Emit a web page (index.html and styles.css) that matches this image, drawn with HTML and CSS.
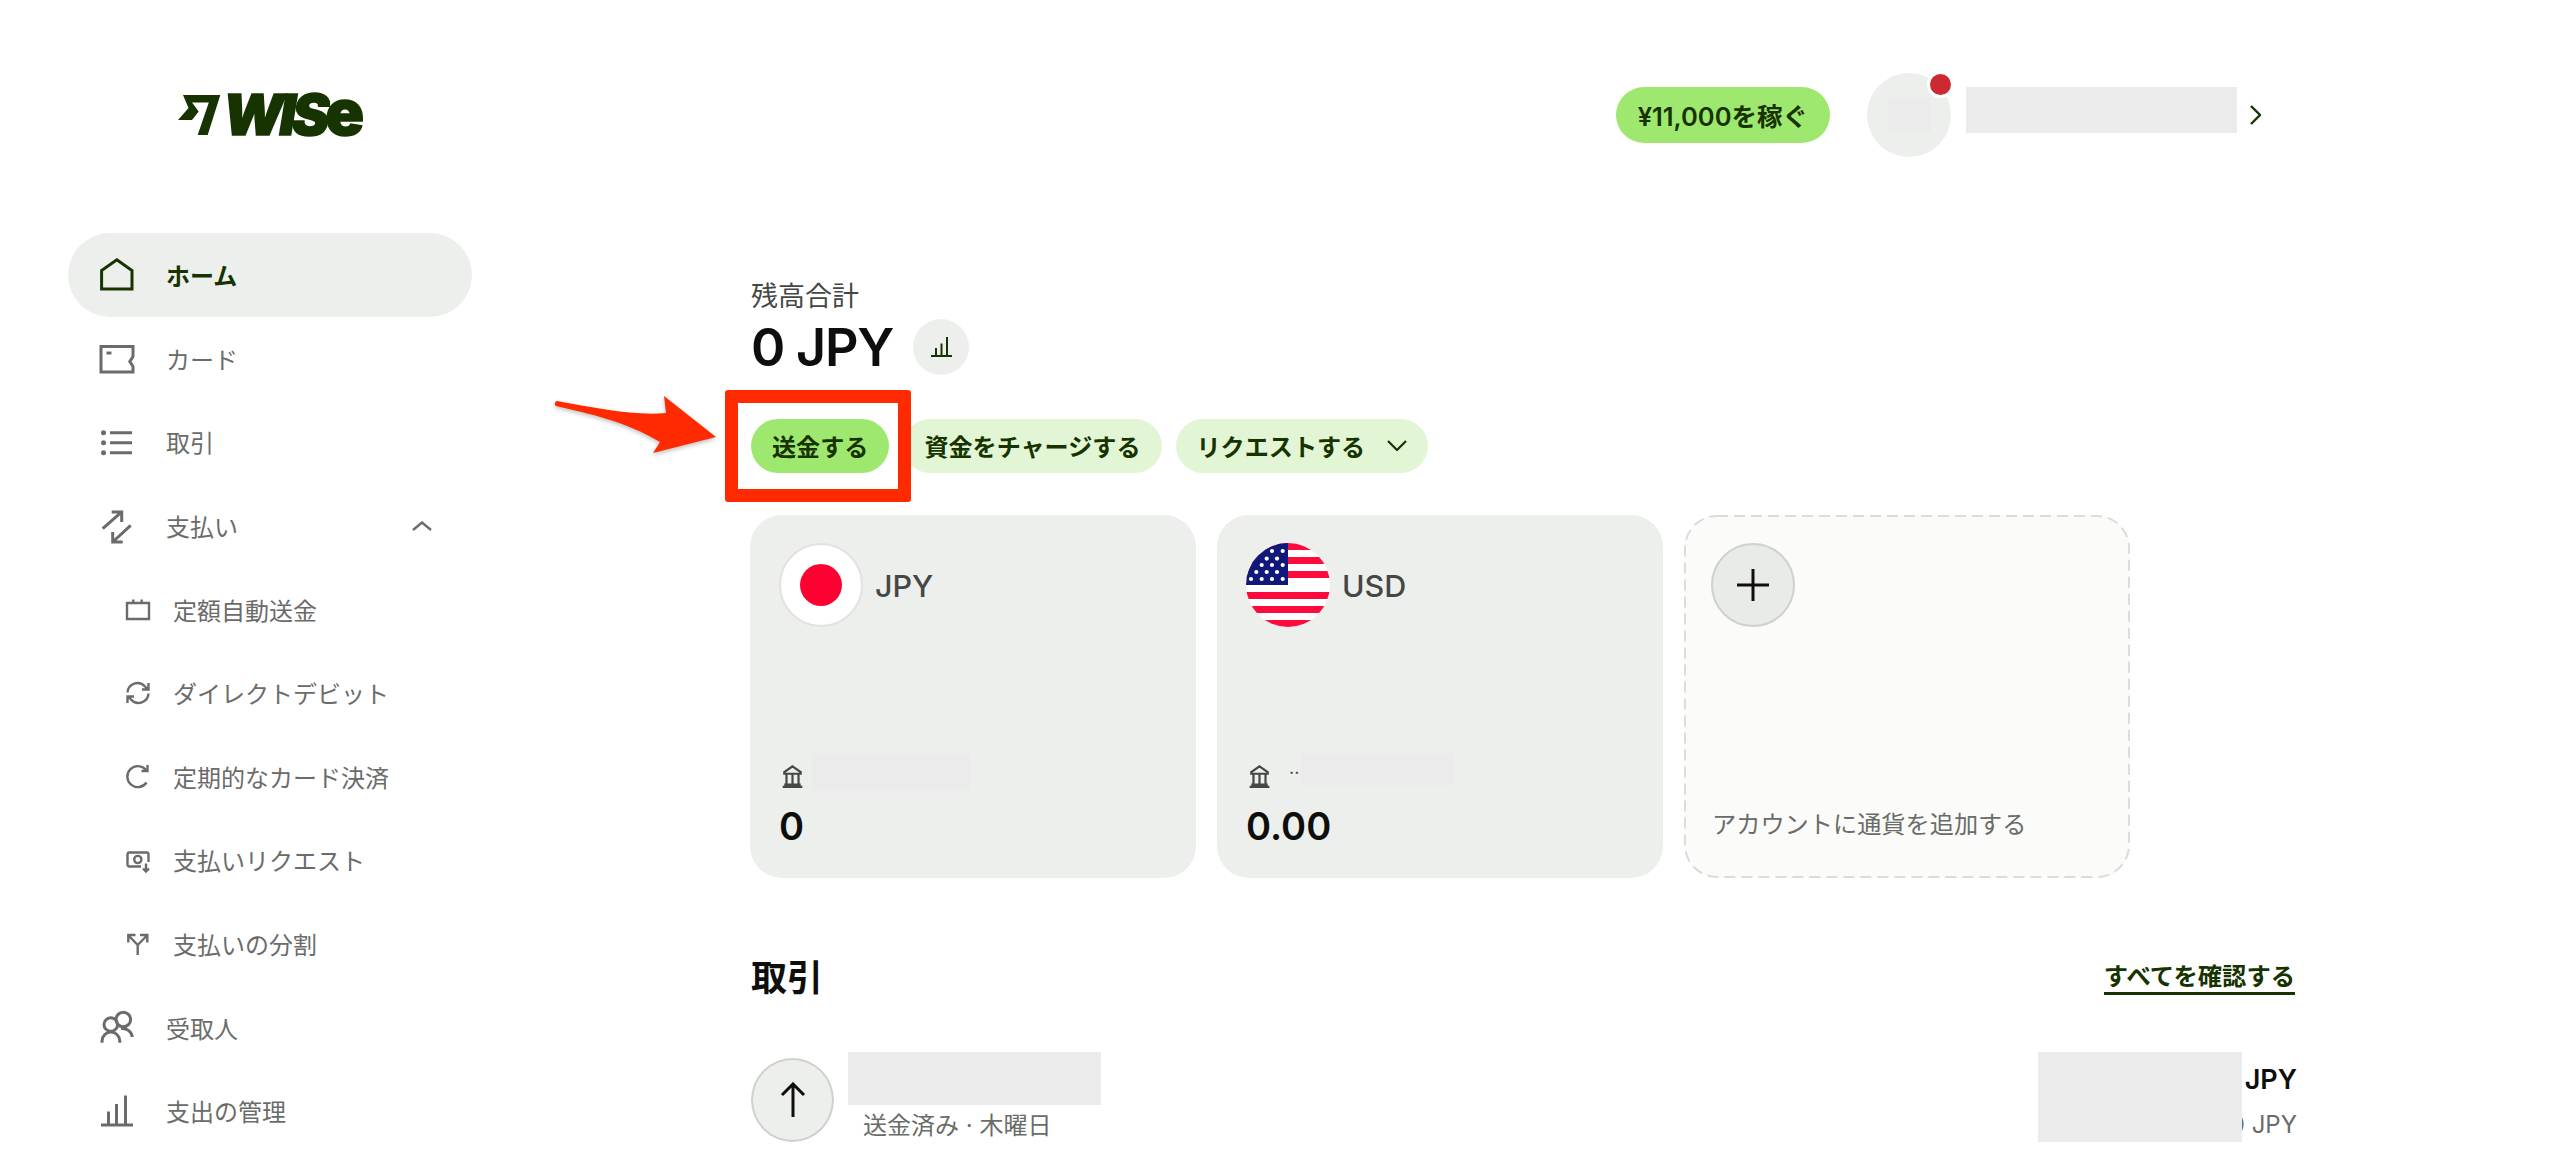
FILE: index.html
```html
<!DOCTYPE html>
<html lang="ja">
  <head>
    <meta charset="UTF-8" />
    <meta name="viewport" content="width=device-width, initial-scale=1.0" />
    <title>Wise</title>
    <link rel="stylesheet" href="styles.css">
  </head>
  <body>
    <div class="page">
      <!-- Sidebar -->
      <aside class="sidebar">
        <a class="logo">
          <svg class="logo__mark" viewBox="0 0 43 40"><path d="M5 0H42.3L29.7 40H19.7L30.8 7.5H14L20.7 16.5L14 25H0L10.5 13Z"/></svg>
          <span class="logo__word">WIS<span class="logo__e">e</span></span>
        </a>
        <nav class="nav">
          <a class="nav__item nav__item--active">
            <svg class="nav__icon" viewBox="0 0 34 34"><path d="M16.8 1.8L32 12.5V31H1.6V12.5Z"/></svg>
            <span>ホーム</span>
          </a>
          <a class="nav__item">
            <svg class="nav__icon" viewBox="0 0 34 34"><path d="M1 5.5H33V15.5L29.8 20.5L33 25.5V31H1Z"/><path d="M6.5 12H11.5"/></svg>
            <span>カード</span>
          </a>
          <a class="nav__item">
            <svg class="nav__icon" viewBox="0 0 34 34"><path d="M10 7.7H32M10 17.7H32M10 27.7H32"/><path class="nav__dot" d="M3.5 7.7h.01M3.5 17.7h.01M3.5 27.7h.01"/></svg>
            <span>取引</span>
          </a>
          <a class="nav__item">
            <svg class="nav__icon" viewBox="0 0 34 34"><path d="M2.7 19.7L21.7 2.8M11.7 3H21.7V13M30.7 16.3L12.7 33M12.7 23V33H22.7"/></svg>
            <span>支払い</span>
            <svg class="nav__chevron" viewBox="0 0 20 10"><path d="M1 9L10 1.5L19 9"/></svg>
          </a>
          <a class="nav__item nav__item--sub">
            <svg class="nav__icon" viewBox="0 0 24 24"><path d="M1 6H23V22H1ZM7.3 2.5V7M15.7 2.5V7"/><path d="M17.3 16.3h.01"/></svg>
            <span>定額自動送金</span>
          </a>
          <a class="nav__item nav__item--sub">
            <svg class="nav__icon" viewBox="0 0 24 24"><path d="M1.5 11.5A10 10 0 0 1 19 5.5L22 8.5M22.5 2V8.5H16M22.5 12.5A10 10 0 0 1 5 18.5L2 15.5M1.5 22V15.5H8"/></svg>
            <span>ダイレクトデビット</span>
          </a>
          <a class="nav__item nav__item--sub">
            <svg class="nav__icon" viewBox="0 0 24 24"><path d="M20 6A10.5 10.5 0 1 0 20.5 18.5M21.5 1V7H15.5"/></svg>
            <span>定期的なカード決済</span>
          </a>
          <a class="nav__item nav__item--sub">
            <svg class="nav__icon" viewBox="0 0 24 24"><path d="M15 18.5H3A2 2 0 0 1 1.5 17V6A2 2 0 0 1 3 4.5H21A2 2 0 0 1 22.5 6V14"/><circle cx="11.8" cy="11.5" r="3.6"/><path d="M20 15.5V23M17 20.5L20 23.5L23 20.5"/></svg>
            <span>支払いリクエスト</span>
          </a>
          <a class="nav__item nav__item--sub">
            <svg class="nav__icon" viewBox="0 0 24 24"><path d="M11.7 23V13L2.5 3.5M2.3 10.5V3H9.5M11.7 13L21 3.5M14 3H21.3V10.5"/></svg>
            <span>支払いの分割</span>
          </a>
          <a class="nav__item">
            <svg class="nav__icon" viewBox="0 0 34 34"><circle cx="10.8" cy="14.5" r="6.8"/><circle cx="23.3" cy="9.5" r="7.3"/><path d="M2 32.8V31A8.8 8.8 0 0 1 19.8 31V32.8M21 18.5A10 10 0 0 1 32.3 27"/></svg>
            <span>受取人</span>
          </a>
          <a class="nav__item">
            <svg class="nav__icon" viewBox="0 0 34 34"><path d="M1 31H33M8.5 31V17.5M16.5 31V10M25.5 31V1.5"/></svg>
            <span>支出の管理</span>
          </a>
        </nav>
      </aside>

      <!-- Main -->
      <main class="content">
        <header class="topbar">
          <button class="btn btn--primary btn--earn">¥11,000を稼ぐ</button>
          <div class="avatar">
            <span class="avatar__mask"></span>
            <span class="avatar__dot"></span>
          </div>
          <span class="topbar__name"></span>
          <svg class="topbar__chevron" viewBox="0 0 11 20"><path d="M1 1L10 10L1 19"/></svg>
        </header>

        <section class="balance">
          <p class="balance__label">残高合計</p>
          <div class="balance__total">
            <span class="balance__amount">0 JPY</span>
            <span class="balance__chart">
              <svg viewBox="0 0 21 20"><path d="M0 19H21M5 19V11M10.5 19V6.5M16 19V0"/></svg>
            </span>
          </div>
        </section>

        <div class="actions">
          <button class="btn btn--primary">送金する</button>
          <button class="btn btn--soft">資金をチャージする</button>
          <button class="btn btn--soft">リクエストする
            <svg class="btn__chevron" viewBox="0 0 20 11"><path d="M1 1L10 10L19 1"/></svg>
          </button>
        </div>

        <div class="cards">
          <div class="card">
            <div class="card__head">
              <svg class="flag" viewBox="0 0 84 84"><circle class="flag__ring" cx="42" cy="42" r="41"/><circle cx="42" cy="42" r="21" fill="#ff0033"/></svg>
              <span class="card__currency">JPY</span>
            </div>
            <div class="card__foot">
              <div class="card__bank">
                <svg class="card__bank-icon" viewBox="0 0 21 21"><path d="M10.5 1.2L18 6.5V8H3V6.5ZM1.5 20H19.5M5 8V18M10.5 8V18M16 8V18M3 18H18"/></svg>
                <span class="card__mask"></span>
              </div>
              <div class="card__amount">0</div>
            </div>
          </div>

          <div class="card">
            <div class="card__head">
              <svg class="flag" viewBox="0 0 84 84">
                <defs><clipPath id="flag-clip"><circle cx="42" cy="42" r="42"/></clipPath></defs>
                <g clip-path="url(#flag-clip)">
                  <rect width="84" height="84" fill="#fff"/>
                  <path d="M0 0H84V7H0ZM0 14H84V21H0ZM0 28H84V35H0ZM0 49H84V56H0ZM0 63H84V70H0ZM0 77H84V84H0Z" fill="#ff0a3c"/>
                  <rect width="42" height="42" fill="#10187a"/>
                  <g fill="#fff">
                    <circle cx="26" cy="8" r="2.1"/><circle cx="36.7" cy="8" r="2.1"/>
                    <circle cx="20.7" cy="15.6" r="2.1"/><circle cx="31" cy="15.6" r="2.1"/>
                    <circle cx="15.7" cy="22" r="2.1"/><circle cx="26" cy="22" r="2.1"/><circle cx="36.7" cy="22" r="2.1"/>
                    <circle cx="10.3" cy="29" r="2.1"/><circle cx="20.7" cy="29" r="2.1"/><circle cx="31" cy="29" r="2.1"/>
                    <circle cx="5" cy="36" r="2.1"/><circle cx="15.7" cy="36" r="2.1"/><circle cx="26" cy="36" r="2.1"/><circle cx="36.7" cy="36" r="2.1"/>
                  </g>
                </g>
              </svg>
              <span class="card__currency">USD</span>
            </div>
            <div class="card__foot">
              <div class="card__bank card__bank--usd">
                <svg class="card__bank-icon" viewBox="0 0 21 21"><path d="M10.5 1.2L18 6.5V8H3V6.5ZM1.5 20H19.5M5 8V18M10.5 8V18M16 8V18M3 18H18"/></svg>
                <span class="card__dots">··</span>
                <span class="card__mask card__mask--usd"></span>
              </div>
              <div class="card__amount">0.00</div>
            </div>
          </div>

          <div class="card card--add">
            <svg class="card__dash" viewBox="0 0 446 363"><rect x="1" y="1" width="444" height="361" rx="32"/></svg>
            <span class="card__plus">
              <svg viewBox="0 0 32 32"><path d="M16 0V32M0 16H32"/></svg>
            </span>
            <span class="card__add-label">アカウントに通貨を追加する</span>
          </div>
        </div>

        <div class="section-head">
          <h2 class="section-head__title">取引</h2>
          <a class="section-head__link">すべてを確認する</a>
        </div>

        <div class="tx">
          <span class="tx__icon">
            <svg viewBox="0 0 28 36"><path d="M14 35V2M3 13L14 2L25 13"/></svg>
          </span>
          <div class="tx__info">
            <span class="tx__mask"></span>
            <span class="tx__meta">送金済み · 木曜日</span>
          </div>
          <div class="tx__right">
            <span class="tx__amount">JPY</span>
            <span class="tx__sub">0 JPY</span>
            <span class="tx__right-mask"></span>
          </div>
        </div>
      </main>

      <!-- Annotation over the screenshot -->
      <span class="note-box"></span>
      <svg class="note-arrow" viewBox="0 0 165 62"><path d="M2 5C40 12 80 20 111 17L109 0L161 41L98 57L105 46C70 25 35 18 1 10C-1 9 0 5 2 5Z"/></svg>
    </div>
  </body>
</html>
```

FILE: styles.css
```css
* {
  box-sizing: border-box;
}

body {
  margin: 0;
  background-color: #fff;
  color: #0e0f0c;
  font-family: Inter, "Noto Sans CJK JP", sans-serif;
}

.page {
  position: relative;
  display: flex;
  width: 2560px;
  height: 1170px;
  overflow: hidden;
}

p,
h2 {
  margin: 0;
}

/* Sidebar */
.sidebar {
  width: 404px;
  margin: 0 68px;
  flex-shrink: 0;
}

.logo {
  display: flex;
  align-items: center;
  height: 42px;
  margin: 94px 0 97px 110px;
  color: #163300;
}

.logo__mark {
  width: 43px;
  height: 40px;
  fill: #163300;
}

.logo__word {
  margin: -4px 0 0 2px;
  font-size: 56px;
  font-weight: 900;
  font-style: italic;
  letter-spacing: -4px;
  line-height: 42px;
  white-space: nowrap;
  -webkit-text-stroke: 1.5px #163300;
}

.logo__e {
  font-size: 64px;
  font-style: normal;
  letter-spacing: 0;
}

.nav__item {
  display: flex;
  align-items: center;
  height: 83.6px;
  padding: 0 40px 0 32px;
  border-radius: 42px;
  color: #6a6c6a;
  font-size: 24px;
}

.nav__item--active {
  background-color: #edefec;
  color: #163300;
  font-weight: 700;
}

.nav__item--sub {
  padding-left: 58px;
}

.nav__icon {
  width: 34px;
  height: 34px;
  margin-right: 32px;
  flex-shrink: 0;
  fill: none;
  stroke: currentColor;
  stroke-width: 3;
  overflow: visible;
}

.nav__item--sub .nav__icon {
  width: 24px;
  height: 24px;
  margin-right: 23px;
  stroke-width: 2.4;
}

.nav__dot {
  stroke-width: 5;
  stroke-linecap: round;
}

.nav__chevron {
  width: 20px;
  height: 10px;
  margin-left: auto;
  fill: none;
  stroke: currentColor;
  stroke-width: 2.4;
}

/* Main column */
.content {
  flex: none;
  width: 1755px;
  padding-left: 211px;
}

.topbar {
  display: flex;
  align-items: center;
  justify-content: flex-end;
  width: 1510px;
  height: 84px;
  margin-top: 73px;
}

.btn {
  display: inline-flex;
  align-items: center;
  height: 54px;
  padding: 0 21px 2px;
  border: none;
  border-radius: 28px;
  color: #163300;
  font-family: inherit;
  font-size: 24.1px;
  font-weight: 600;
  white-space: nowrap;
}

.btn--primary {
  background-color: #9fe870;
}

.btn--soft {
  background-color: #e2f6d5;
}

.btn--earn {
  height: 56px;
  padding: 0 22px 2px;
  margin-right: 37px;
  font-size: 25.5px;
}

.btn__chevron {
  width: 20px;
  height: 11px;
  margin-left: 22px;
  fill: none;
  stroke: #163300;
  stroke-width: 2.2;
}

.avatar {
  position: relative;
  display: flex;
  align-items: center;
  justify-content: center;
  width: 84px;
  height: 84px;
  border-radius: 50%;
  background-color: #edefec;
}

.avatar__mask {
  width: 43px;
  height: 36px;
  background-color: #ebebeb;
}

.avatar__dot {
  position: absolute;
  top: -2px;
  right: -3px;
  width: 27px;
  height: 27px;
  border: 3px solid #fff;
  border-radius: 50%;
  background-color: #cb2a33;
}

.topbar__name {
  width: 271px;
  height: 46px;
  margin: -10px 0 0 15px;
  background-color: #ebebeb;
}

.topbar__chevron {
  width: 11px;
  height: 20px;
  margin-left: 13px;
  fill: none;
  stroke: #163300;
  stroke-width: 2.4;
}

/* Balance */
.balance {
  margin-top: 120px;
}

.balance__label {
  color: #454745;
  font-size: 27px;
  line-height: 40px;
}

.balance__total {
  display: flex;
  align-items: center;
  height: 56px;
  margin-top: 2px;
}

.balance__amount {
  padding-top: 2px;
  font-size: 52px;
  font-weight: 600;
  line-height: 56px;
  letter-spacing: -1.2px;
}

.balance__chart {
  display: flex;
  align-items: center;
  justify-content: center;
  width: 56px;
  height: 56px;
  margin-left: 20px;
  border-radius: 50%;
  background-color: #edefec;
}

.balance__chart svg {
  width: 21px;
  height: 20px;
  fill: none;
  stroke: #163300;
  stroke-width: 2;
}

.actions {
  display: flex;
  gap: 14px;
  margin-top: 44px;
}

/* Currency cards */
.cards {
  display: grid;
  grid-template-columns: repeat(3, 446px);
  gap: 21px;
  margin: 42px 0 0 -1px;
}

.card {
  position: relative;
  display: flex;
  flex-direction: column;
  justify-content: space-between;
  height: 363px;
  padding: 28px 29px;
  border-radius: 32px;
  background-color: #edefec;
}

.card__head {
  display: flex;
  align-items: center;
}

.flag {
  width: 84px;
  height: 84px;
}

.flag__ring {
  fill: #fff;
  stroke: #e2e2e0;
  stroke-width: 2;
}

.card__currency {
  margin-left: 12px;
  color: #454745;
  font-size: 30.5px;
  font-weight: 500;
}

.card__bank {
  display: flex;
  align-items: flex-start;
  height: 38px;
  margin-bottom: 11px;
}

.card__bank-icon {
  width: 23px;
  height: 23px;
  margin: 12px 8px 0 2px;
  fill: none;
  stroke: #454745;
  stroke-width: 2;
}

.card__mask {
  width: 158px;
  height: 38px;
  background-color: #ebebeb;
}

.card__mask--usd {
  width: 153px;
  height: 32px;
}

.card__dots {
  margin: 8px 2px 0 10px;
  color: #454745;
  font-size: 18px;
  line-height: 24px;
}

.card__amount {
  font-size: 38px;
  font-weight: 600;
  line-height: 48px;
}

.card--add {
  padding: 28px 30px;
  background-color: #fbfbf9;
}

.card__dash {
  position: absolute;
  top: 0;
  left: 0;
  width: 446px;
  height: 363px;
  fill: none;
  stroke: #dcdcda;
  stroke-width: 2;
  stroke-dasharray: 11 6;
}

.card__plus {
  display: flex;
  align-items: center;
  justify-content: center;
  width: 84px;
  height: 84px;
  margin-left: -3px;
  border: 2px solid #cfd2cc;
  border-radius: 50%;
  background-color: #e8ebe7;
}

.card__plus svg {
  width: 32px;
  height: 32px;
  fill: none;
  stroke: #0e0f0c;
  stroke-width: 3;
}

.card__add-label {
  margin: 0 0 7px -2px;
  color: #6a6c6a;
  font-size: 24.2px;
  line-height: 36px;
}

/* Transactions */
.section-head {
  display: flex;
  align-items: center;
  justify-content: space-between;
  height: 50px;
  margin-top: 72px;
}

.section-head__title {
  font-size: 36px;
  font-weight: 700;
}

.section-head__link {
  margin-top: 4px;
  border-bottom: 3px solid #163300;
  color: #163300;
  font-size: 24.3px;
  font-weight: 600;
  line-height: 32px;
}

.tx {
  display: flex;
  align-items: flex-start;
  margin-top: 52px;
}

.tx__icon {
  display: flex;
  align-items: center;
  justify-content: center;
  width: 83px;
  height: 84px;
  margin-top: 6px;
  border: 2px solid #cfd2cc;
  border-radius: 50%;
  background-color: #edefec;
}

.tx__icon svg {
  width: 28px;
  height: 36px;
  fill: none;
  stroke: #0e0f0c;
  stroke-width: 3;
}

.tx__info {
  display: flex;
  flex-direction: column;
  margin-left: 14px;
}

.tx__mask {
  width: 253px;
  height: 53px;
  background-color: #ebebeb;
}

.tx__meta {
  margin: 5px 0 0 15px;
  color: #6a6c6a;
  font-size: 24px;
  line-height: 32px;
}

.tx__right {
  position: relative;
  display: flex;
  flex-direction: column;
  align-items: flex-end;
  width: 259px;
  margin: 0 -2px 0 auto;
}

.tx__amount {
  margin-top: 12px;
  font-size: 27px;
  font-weight: 600;
  line-height: 32px;
}

.tx__sub {
  margin-top: 13px;
  color: #6a6c6a;
  font-size: 24px;
  line-height: 32px;
}

.tx__right-mask {
  position: absolute;
  top: 0;
  left: 0;
  width: 204px;
  height: 90px;
  background-color: #ebebeb;
}

/* Annotation */
.note-box {
  position: absolute;
  top: 390px;
  left: 725px;
  width: 186px;
  height: 112px;
  border: 13px solid #ff2a00;
  border-radius: 3px;
}

.note-arrow {
  position: absolute;
  top: 396px;
  left: 555px;
  width: 165px;
  height: 62px;
  fill: #ff2a00;
  overflow: visible;
  filter: drop-shadow(0 2px 2px rgba(0, 0, 0, 0.25));
}
```
